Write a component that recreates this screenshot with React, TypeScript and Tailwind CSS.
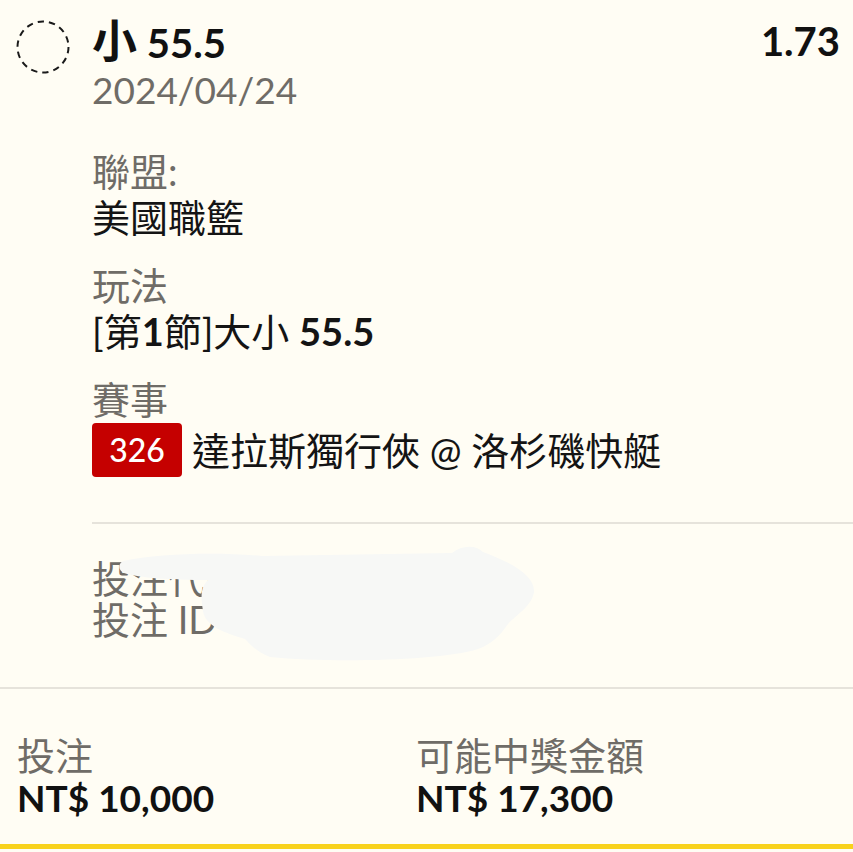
import React from "react";

const font = "font-['Lato','Noto_Sans_CJK_TC',sans-serif]";

const Label = ({ children }: { children: React.ReactNode }) => (
  <div className="text-[38px] leading-[46px] text-[#6f6c67]">{children}</div>
);

const Value = ({ children }: { children: React.ReactNode }) => (
  <div className="text-[38px] leading-[46px] text-[#141414]">{children}</div>
);

const DashedCircle = () => (
  <svg width="54" height="54" viewBox="0 0 54 54" className="shrink-0">
    <circle
      cx="27"
      cy="27"
      r="25.5"
      fill="none"
      stroke="#1a1a1a"
      strokeWidth="2"
      strokeDasharray="6.4 5"
    />
  </svg>
);

// the screenshot has the bet code / id scribbled out
const Scribble = () => (
  <svg
    className="pointer-events-none absolute left-0 top-0"
    width="853"
    height="852"
    viewBox="0 0 853 852"
  >
    <path
      fill="#f7f8f6"
      d="M123 561 C 160 553, 220 552, 262 556 L 452 553 C 462 545, 476 545, 483 552 C 510 562, 535 575, 534 592 C 532 606, 516 615, 508 624 C 500 636, 490 645, 478 649 C 440 661, 330 663, 270 657 C 255 651, 250 644, 245 639 C 225 633, 205 626, 203 611 C 201 598, 200 588, 208 580 C 170 580, 140 578, 124 573 C 118 570, 118 564, 123 561 Z"
    />
  </svg>
);

export default function App() {
  return (
    <div className={`relative flex min-h-[852px] flex-col bg-[#fffdf4] ${font}`}>
      <div className="flex pl-4 pt-[17px]">
        <div className="pt-[3px]">
          <DashedCircle />
        </div>
        <div className="ml-[22px] flex-1">
          <div className="flex items-start justify-between pr-[13px]">
            <div className="text-[40px] font-bold leading-[48px] text-[#111]">
              <span className="text-[45px]">小</span> 55.5
            </div>
            <div className="text-[40px] font-bold leading-[48px] text-[#111]">1.73</div>
          </div>
          <div className="text-[37px] leading-[46px] text-[#6f6c67]">2024/04/24</div>

          <div className="mt-[35px]">
            <Label>聯盟:</Label>
            <Value>美國職籃</Value>
          </div>
          <div className="mt-[22px]">
            <Label>玩法</Label>
            <Value>
              [第<span className="font-bold">1</span>節]大小 <span className="font-bold">55.5</span>
            </Value>
          </div>
          <div className="mt-[22px]">
            <Label>賽事</Label>
            <div className="mt-px flex items-center gap-[10px]">
              <div className="flex h-[54px] w-[90px] items-center justify-center rounded-[4px] bg-[#c50000] text-[32px] font-medium text-white">
                326
              </div>
              <Value>達拉斯獨行俠 @ 洛杉磯快艇</Value>
            </div>
          </div>

          <div className="mt-[45px] h-[2px] bg-[#e6e3db]" />

          <div className="pb-[47px] pt-[34px] text-[38px] leading-[41px] text-[#6f6c67]">
            <div>投注代碼</div>
            <div>投注 ID</div>
          </div>
        </div>
      </div>

      <div className="h-[2px] bg-[#e6e3db]" />

      <div className="flex px-[17px] pt-[43px]">
        <div className="w-[399px]">
          <Label>投注</Label>
          <div className="text-[37px] font-bold leading-[40px] text-[#111]">NT$ 10,000</div>
        </div>
        <div className="flex-1">
          <Label>可能中獎金額</Label>
          <div className="text-[37px] font-bold leading-[40px] text-[#111]">NT$ 17,300</div>
        </div>
      </div>

      <div className="mt-[26px] h-[5px] bg-[#f8d21c]" />
      <div className="flex-1" />

      <Scribble />
    </div>
  );
}
